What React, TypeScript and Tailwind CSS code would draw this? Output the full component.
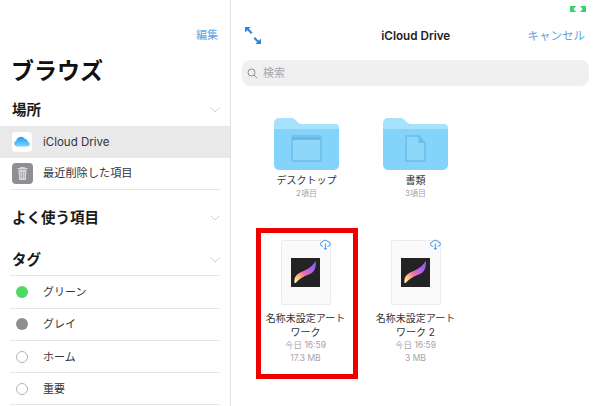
import React from "react";

const Chevron = () => (
  <svg width="10" height="6" viewBox="0 0 10 6" fill="none" stroke="#d0d0d4" strokeWidth="1">
    <path d="M.5.5l4.500 4.500L9.500.5" />
  </svg>
);

const Section = ({ label, className }: { label: string; className: string }) => (
  <div className={`flex items-center justify-between pl-3 pr-[10px] ${className}`}>
    <span className="text-[14.5px] font-bold leading-none text-[#1a1a1a]">{label}</span>
    <Chevron />
  </div>
);

const CloudIcon = () => (
  <svg width="20" height="20" viewBox="0 0 20 20">
    <defs>
      <linearGradient id="cl" x1="0" y1="0" x2="0" y2="1">
        <stop offset="0" stopColor="#1f9bf3" />
        <stop offset="1" stopColor="#7fd4fb" />
      </linearGradient>
    </defs>
    <rect width="20" height="20" rx="4" fill="#fff" />
    <path d="M4.800 14.500a3 3 0 0 1-.8-5.800 5 5 0 0 1 8.900-1.900 3.700 3.700 0 0 1 3.200 2.900 2.500 2.500 0 0 1-.3 4.800z" fill="url(#cl)" />
  </svg>
);

const TrashIcon = () => (
  <svg width="21" height="21" viewBox="0 0 21 21">
    <rect width="21" height="21" rx="4" fill="#8e8e93" />
    <path d="M5.500 5.700h10" stroke="#e8e8e8" strokeWidth="1" />
    <path d="M8.500 5.500v-1h4v1" stroke="#e8e8e8" strokeWidth="0.8" fill="none" />
    <path d="M6.500 6.700h8l-.6 10.300H7.100z" fill="#d8d8da" />
    <path d="M8.700 8.500v6.800M10.500 8.500v6.800M12.300 8.500v6.800" stroke="#8e8e93" strokeWidth="0.6" />
  </svg>
);

const ItemRow = ({ icon, label, textClass }: { icon: React.ReactNode; label: string; textClass: string }) => (
  <div className="mx-[10px] flex h-[32.3px] items-center border-b border-[#e6e6e8]">
    <div className="flex w-[24px] shrink-0 justify-center">{icon}</div>
    <span className={`ml-[9px] text-[#333338] ${textClass}`}>{label}</span>
  </div>
);

const Tag = ({ cls, label }: { cls: string; label: string }) => (
  <ItemRow icon={<span className={`h-3 w-3 rounded-full ${cls}`} />} label={label} textClass="text-[11px] pt-[1px]" />
);

const Folder = ({ kind }: { kind: "window" | "doc" }) => (
  <svg width="65" height="52" viewBox="0 0 65 52" className="block">
    <path d="M0 5a5 5 0 0 1 5-5h11.500c2.500 0 3.500.6 5 2l2.200 2.300c1.300 1.300 2.300 1.700 4 1.700H61a4 4 0 0 1 4 4v6H0z" fill="#a6e2fe" />
    <path d="M0 11h65v36a5 5 0 0 1-5 5H5a5 5 0 0 1-5-5z" fill="#84d3fb" />
    {kind === "window" ? (
      <g>
        <rect x="18" y="18" width="29" height="25" rx="1.500" fill="#8dd7fb" stroke="#6fbde5" strokeWidth="1.600" />
        <path d="M18.500 20.500h28" stroke="#6bb9e2" strokeWidth="3" />
      </g>
    ) : (
      <path d="M23 18h12.500l6.500 7v18H23z" fill="#8dd7fb" stroke="#6fbde5" strokeWidth="1.600" />
    )}
    {kind === "doc" && <path d="M35.500 18l6.500 7h-6.500z" fill="#6fbde5" />}
  </svg>
);

const FolderItem = ({ kind, name, sub }: { kind: "window" | "doc"; name: string; sub: string }) => (
  <div className="flex flex-col items-center">
    <Folder kind={kind} />
    <div className="mt-[4px] text-[10px] leading-[13px] text-[#333338]">{name}</div>
    <div className="mt-[1px] text-[8px] leading-[11px] text-[#a5a5aa]">{sub}</div>
  </div>
);

const Procreate = ({ id }: { id: string }) => (
  <svg width="29" height="29" viewBox="0 0 29 29" className="block">
    <defs>
      <linearGradient id={id} x1="0.05" y1="0.95" x2="0.95" y2="0.05">
        <stop offset="0" stopColor="#fbf3c4" />
        <stop offset="0.22" stopColor="#f9bb6a" />
        <stop offset="0.42" stopColor="#ee6fb4" />
        <stop offset="0.7" stopColor="#b55df2" />
        <stop offset="1" stopColor="#7a5ff0" />
      </linearGradient>
    </defs>
    <rect width="29" height="29" fill="#232323" />
    <path d="M3.500 25C3 21 4 18.200 6.800 16c3.500-2.800 8-3.200 12-6.500 2.200-1.800 4.200-3.800 6-6.800.5 4.500-.2 8-2.400 10.800-2.400 2.800-5.500 3-8.900 4.700C10.500 19.700 7.500 21.500 4.700 25z" fill={`url(#${id})`} />
  </svg>
);

const CloudDown = () => (
  <svg width="11" height="11" viewBox="0 0 11 11" fill="none" stroke="#2f8fe8" strokeWidth="0.9" className="block">
    <path d="M3.200 7.200H2.600a2 2 0 0 1-.2-4A3 3 0 0 1 8 3a2.100 2.100 0 0 1 .4 4.200H7.600" />
    <path d="M5.400 4.500v6M3.800 9l1.600 1.500L7 9" />
  </svg>
);

const FileItem = ({ id, line2, size, marked }: { id: string; line2: string; size: string; marked?: boolean }) => (
  <div className="relative flex w-[96px] flex-col items-center">
    <div className="relative flex h-[65px] w-[50px] items-center justify-center rounded-[2px] border border-[#ececee] bg-[#fafafa]">
      <Procreate id={id} />
      <span className="absolute -right-px -top-[2px]">
        <CloudDown />
      </span>
    </div>
    <div className="mt-[6px] w-[96px] text-center text-[10px] leading-[14px] text-[#333338]">
      名称未設定アート
      <br />
      {line2}
    </div>
    <div className="text-center text-[8.5px] leading-[12.5px] text-[#a5a5aa]">
      今日 16:59
      <br />
      {size}
    </div>
    {marked && (
      <span className="absolute left-[-2px] top-[-12px] h-[151px] w-[102px] border-[5px] border-[#ee0000]" />
    )}
  </div>
);

export default function App() {
  return (
    <div
      className="flex h-[406px] w-[600px] overflow-hidden bg-white"
      style={{ fontFamily: 'Inter, "Noto Sans CJK JP", sans-serif' }}
    >
      <aside className="flex w-[231px] shrink-0 flex-col border-r border-[#e2e2e4]">
        <div className="flex h-[44px] items-end justify-end pr-[12px] text-[11px] leading-[14px] text-[#5da3df]">
          <span className="mb-[2px]">編集</span>
        </div>
        <h1 className="mt-[13px] pl-[11px] text-[23px] font-bold leading-[28px] text-[#111]">ブラウズ</h1>
        <Section label="場所" className="mb-[1px] mt-[10px] h-[30px]" />
        <div className="flex h-8 items-center bg-[#e9e9ea]">
          <div className="flex w-[44px] shrink-0 justify-center pr-[1px]">
            <CloudIcon />
          </div>
          <span className="-ml-px pt-[1px] text-[11.5px] text-[#333338]">iCloud Drive</span>
        </div>
        <ItemRow icon={<TrashIcon />} label="最近削除した項目" textClass="text-[11.2px]" />
        <Section label="よく使う項目" className="mt-[16px] h-[24px]" />
        <Section label="タグ" className="mt-[18px] h-[24px]" />
        <div className="mx-[10px] mt-[3px] border-b border-[#e6e6e8]" />
        <Tag cls="bg-[#4cd964]" label="グリーン" />
        <Tag cls="bg-[#8e8e93]" label="グレイ" />
        <Tag cls="border border-[#b5b5b8]" label="ホーム" />
        <Tag cls="border border-[#b5b5b8]" label="重要" />
      </aside>

      <main className="relative flex min-w-0 flex-1 flex-col">
        <span className="absolute right-[14px] top-[6px]">
          <svg width="16" height="6" viewBox="0 0 16 6" className="block">
            <path d="M0 0h6L3.500 3 6 6H0zM10 0h6v6h-6l2.500-3z" fill="#3cd070" />
          </svg>
        </span>
        <header className="flex h-[60px] items-end justify-between pb-[16px] pl-[14px] pr-[15px]">
          <svg width="16" height="17" viewBox="0 0 16 17" className="block">
            <path d="M0 0h5.500L3.800 1.700 7.500 5.400 6 6.900 2.300 3.200 0 5.500z" fill="#2f82e6" />
            <path d="M16 17h-5.500l1.700-1.700L8.500 11.600 10 10.100l3.700 3.700L16 11.500z" fill="#2f82e6" />
          </svg>
          <span className="mb-[-1px] ml-[43px] text-[11.7px] font-semibold leading-[17px] text-[#222]">iCloud Drive</span>
          <span className="mb-[-1px] text-[11.5px] leading-[17px] text-[#5da3df]">キャンセル</span>
        </header>
        <div className="mx-[11px] flex h-[26px] items-center gap-[5px] rounded-[8px] bg-[#f0f0f1] pl-[5px]">
          <svg width="11" height="11" viewBox="0 0 11 11" fill="none" stroke="#8e8e93" strokeWidth="1" className="block">
            <circle cx="4.500" cy="4.500" r="3.500" />
            <path d="M7 7l3.300 3.300" />
          </svg>
          <span className="text-[11px] text-[#a5a5aa]">検索</span>
        </div>
        <div className="ml-[21px] mt-[32px] grid w-[218px] grid-cols-[109px_109px] justify-items-center">
          <FolderItem kind="window" name="デスクトップ" sub="2項目" />
          <FolderItem kind="doc" name="書類" sub="3項目" />
          <div className="col-span-2 -ml-px mt-[41px] grid grid-cols-[110px_110px] justify-items-center">
            <FileItem id="p1" line2="ワーク" size="17.3 MB" marked />
            <FileItem id="p2" line2="ワーク 2" size="3 MB" />
          </div>
        </div>
      </main>
    </div>
  );
}
